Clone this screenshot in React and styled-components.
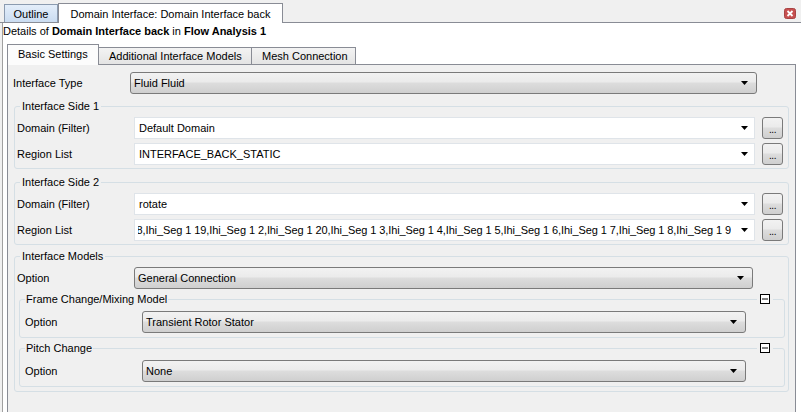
import React from "react";
import styled, { createGlobalStyle } from "styled-components";

const GlobalStyle = createGlobalStyle`
  html, body {
    margin: 0;
    padding: 0;
    background: #f0f0f0;
  }
  body {
    font-family: "Liberation Sans", Arial, sans-serif;
    font-size: 11px;
    color: #000;
  }
`;

const Root = styled.div`
  width: 801px;
  height: 412px;
  overflow: hidden;
  display: flex;
  flex-direction: column;
  background: #f0f0f0;
`;

const TopBar = styled.div`
  display: flex;
  align-items: flex-end;
  height: 22px;
  padding-left: 4px;
  border-bottom: 1px solid #898c95;
  flex-shrink: 0;
`;

const OutlineTab = styled.div`
  box-sizing: border-box;
  width: 54px;
  height: 18px;
  border: 1px solid #8b9bb0;
  border-bottom: none;
  background: linear-gradient(#e4eefa, #cadcf1);
  display: flex;
  align-items: center;
  justify-content: center;
  padding-top: 1px;
`;

const DocTab = styled.div`
  box-sizing: border-box;
  width: 225px;
  height: 20px;
  margin-bottom: -1px;
  border: 1px solid #898c95;
  border-bottom: none;
  background: #fff;
  display: flex;
  align-items: center;
  justify-content: center;
`;

const CloseButton = styled.div`
  margin-left: auto;
  align-self: flex-start;
  margin-top: 8px;
  margin-right: 5px;
  display: flex;
`;

const Body = styled.div`
  flex: 1;
  display: flex;
  flex-direction: column;
  margin-left: 2px;
  border-left: 1px solid #a0a0a0;
  background: #fff;
  padding-left: 4px;
`;

const Details = styled.div`
  height: 17px;
  line-height: 17px;
  margin-left: -4px;
  white-space: nowrap;
`;

const InnerTabs = styled.div`
  display: flex;
  align-items: flex-end;
  height: 24px;
`;

const InnerTab = styled.div`
  box-sizing: border-box;
  width: ${(p) => p.$w}px;
  height: ${(p) => (p.$active ? 21 : 17)}px;
  margin-bottom: ${(p) => (p.$active ? -1 : 0)}px;
  margin-left: ${(p) => (p.$first ? 0 : -1)}px;
  border: 1px solid #898c95;
  border-bottom: none;
  background: ${(p) =>
    p.$active ? "#fcfcfc" : "linear-gradient(#f3f3f3, #e4e4e4)"};
  position: relative;
  z-index: ${(p) => (p.$active ? 2 : 1)};
  display: flex;
  align-items: center;
  padding-left: 10px;
  padding-bottom: ${(p) => (p.$active ? 2 : 0)}px;
  white-space: nowrap;
`;

const Pane = styled.div`
  flex: 1;
  border: 1px solid #898c95;
  border-bottom: none;
  margin-right: 5px;
  background: #f0f0f0;
  padding: 7px 0 0 5px;
`;

const Row = styled.div`
  display: flex;
  align-items: center;
  height: 22px;

  & + & {
    margin-top: 4px;
  }
`;

const Label = styled.div`
  width: ${(p) => p.$w || 117}px;
  flex-shrink: 0;
  white-space: nowrap;
`;

const GrayCombo = styled.div`
  box-sizing: border-box;
  width: ${(p) => p.$w}px;
  height: 22px;
  border: 1px solid #7a7a7a;
  border-radius: 3px;
  background: linear-gradient(#f2f2f2 0%, #ebebeb 45%, #dddddd 50%, #cfcfcf 100%);
  display: flex;
  align-items: center;
  padding: 0 8px 1px 2px;
`;

const WhiteCombo = styled.div`
  box-sizing: border-box;
  width: ${(p) => p.$w}px;
  height: 22px;
  border: 1px solid #dfe4e9;
  background: #fff;
  display: flex;
  align-items: center;
  padding: 0 6px 0 3px;
`;

const Value = styled.div`
  flex: 1;
  overflow: hidden;
  white-space: nowrap;
  display: flex;
  justify-content: ${(p) => (p.$end ? "flex-end" : "flex-start")};
  letter-spacing: ${(p) => (p.$end ? "-0.09px" : "normal")};
  margin-right: 10px;
  padding-left: 1px;

  span {
    flex-shrink: 0;
  }
`;

const DotButton = styled.div`
  box-sizing: border-box;
  width: 21px;
  height: 22px;
  margin-left: 7px;
  border: 1px solid #7a7a7a;
  border-radius: 3px;
  background: linear-gradient(#f2f2f2 0%, #ebebeb 45%, #dddddd 50%, #cfcfcf 100%);
  display: flex;
  align-items: flex-end;
  justify-content: center;
  font-size: 10px;
  line-height: 10px;
  padding-bottom: 3px;
  letter-spacing: -0.5px;
`;

const Group = styled.div`
  box-sizing: border-box;
  width: ${(p) => p.$w}px;
  margin: ${(p) => p.$mt}px 0 0 ${(p) => p.$ml}px;
  border: 1px solid #d5dfe5;
  border-radius: 3px;
  padding: 0 0 ${(p) => p.$pb}px ${(p) => p.$pl}px;
`;

const GroupHead = styled.div`
  display: flex;
  align-items: center;
  height: 14px;
  margin: -8px 0 0 ${(p) => p.$indent}px;
  padding-right: 11px;
`;

const GroupTitle = styled.span`
  background: #f0f0f0;
  padding: 0 ${(p) => p.$pad}px;
  line-height: 14px;
  white-space: nowrap;
`;

const Toggle = styled.span`
  margin-left: auto;
  background: #f0f0f0;
  padding: 0 3px;
  display: flex;
`;

const GroupBody = styled.div`
  padding-top: ${(p) => p.$pt}px;
`;

function Arrow() {
  return (
    <svg width="7" height="4" viewBox="0 0 7 4">
      <polygon points="0,0 7,0 3.5,4" fill="#000" />
    </svg>
  );
}

function CollapseIcon() {
  return (
    <svg width="10" height="10" viewBox="0 0 10 10">
      <rect x="0.5" y="0.5" width="9" height="9" fill="#fff" stroke="#000" />
      <line x1="2" y1="5" x2="8" y2="5" stroke="#000" />
    </svg>
  );
}

function CloseIcon() {
  return (
    <svg width="12" height="11" viewBox="0 0 12 11">
      <rect x="0.5" y="0.5" width="11" height="10" rx="2" fill="#c75050" stroke="#a84444" />
      <path d="M3.5 3 L8.5 8 M8.5 3 L3.5 8" stroke="#fff" strokeWidth="1.8" />
    </svg>
  );
}

// the field is scrolled to its end, so only the tail of the list shows
const segs =
  "8," +
  [19, 2, 20, 3, 4, 5, 6, 7, 8, 9].map((n) => `Ihi_Seg 1 ${n}`).join(",");

function SelectRow({ label, value, end }) {
  return (
    <Row>
      <Label>{label}</Label>
      <WhiteCombo $w={621}>
        <Value $end={end}>
          <span>{value}</span>
        </Value>
        <Arrow />
      </WhiteCombo>
      <DotButton>...</DotButton>
    </Row>
  );
}

function OptionRow({ label, value, labelW, w }) {
  return (
    <Row>
      <Label $w={labelW}>{label}</Label>
      <GrayCombo $w={w}>
        <Value>
          <span>{value}</span>
        </Value>
        <Arrow />
      </GrayCombo>
    </Row>
  );
}

export default function App() {
  return (
    <Root>
      <GlobalStyle />
      <TopBar>
        <OutlineTab>Outline</OutlineTab>
        <DocTab>Domain Interface: Domain Interface back</DocTab>
        <CloseButton>
          <CloseIcon />
        </CloseButton>
      </TopBar>
      <Body>
        <Details>
          Details of <b>Domain Interface back</b> in <b>Flow Analysis 1</b>
        </Details>
        <InnerTabs>
          <InnerTab $w={92} $first $active>
            Basic Settings
          </InnerTab>
          <InnerTab $w={154}>Additional Interface Models</InnerTab>
          <InnerTab $w={105}>Mesh Connection</InnerTab>
        </InnerTabs>
        <Pane>
          <OptionRow label="Interface Type" value="Fluid Fluid" w={627} />

          <Group $w={775} $mt={12} $ml={1} $pl={2} $pb={3}>
            <GroupHead $indent={3}>
              <GroupTitle $pad={2}>Interface Side 1</GroupTitle>
            </GroupHead>
            <GroupBody $pt={4}>
              <SelectRow label="Domain (Filter)" value="Default Domain" />
              <SelectRow label="Region List" value="INTERFACE_BACK_STATIC" />
            </GroupBody>
          </Group>

          <Group $w={775} $mt={13} $ml={1} $pl={2} $pb={3}>
            <GroupHead $indent={3}>
              <GroupTitle $pad={2}>Interface Side 2</GroupTitle>
            </GroupHead>
            <GroupBody $pt={4}>
              <SelectRow label="Domain (Filter)" value="rotate" />
              <SelectRow label="Region List" value={segs} end />
            </GroupBody>
          </Group>

          <Group $w={775} $mt={11} $ml={1} $pl={2} $pb={4}>
            <GroupHead $indent={3}>
              <GroupTitle $pad={2}>Interface Models</GroupTitle>
            </GroupHead>
            <GroupBody $pt={4}>
              <OptionRow label="Option" value="General Connection" w={619} />

              <Group $w={766} $mt={10} $ml={2} $pl={5} $pb={4}>
                <GroupHead $indent={0}>
                  <GroupTitle $pad={1}>Frame Change/Mixing Model</GroupTitle>
                  <Toggle>
                    <CollapseIcon />
                  </Toggle>
                </GroupHead>
                <GroupBody $pt={5}>
                  <OptionRow label="Option" value="Transient Rotor Stator" w={604} />
                </GroupBody>
              </Group>

              <Group $w={766} $mt={10} $ml={2} $pl={5} $pb={4}>
                <GroupHead $indent={0}>
                  <GroupTitle $pad={1}>Pitch Change</GroupTitle>
                  <Toggle>
                    <CollapseIcon />
                  </Toggle>
                </GroupHead>
                <GroupBody $pt={5}>
                  <OptionRow label="Option" value="None" w={604} />
                </GroupBody>
              </Group>
            </GroupBody>
          </Group>
        </Pane>
      </Body>
    </Root>
  );
}
